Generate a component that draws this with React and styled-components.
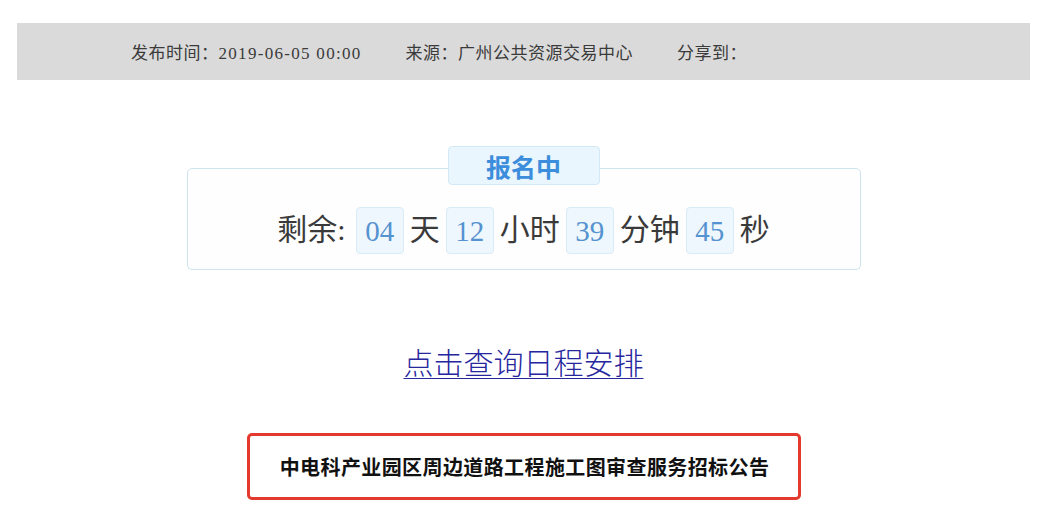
import React from "react";
import styled, { createGlobalStyle } from "styled-components";

const Global = createGlobalStyle`
  html, body { margin: 0; padding: 0; background: #ffffff; }
  body { font-family: "Liberation Serif", "Noto Sans CJK SC", serif; color: #333; }
`;

const Page = styled.div`
  width: 1053px;
  padding: 23px 23px 0 17px;
  box-sizing: border-box;
  display: flex;
  flex-direction: column;
  align-items: stretch;
`;

const InfoBar = styled.div`
  height: 57px;
  background: #dadada;
  display: flex;
  align-items: center;
  gap: 44px;
  padding-left: 114px;
  font-family: "Liberation Serif", "Noto Sans CJK SC", serif;
  font-size: 17px;
  letter-spacing: 0.5px;
  color: #3a3a3a;
`;

const InfoItem = styled.span`
  white-space: nowrap;
`;

const Stamp = styled.span`
  letter-spacing: 1.3px;
`;

const Center = styled.div`
  display: flex;
  flex-direction: column;
  align-items: center;
`;

const CountdownBox = styled.div`
  position: relative;
  margin-top: 88px;
  width: 674px;
  height: 102px;
  box-sizing: border-box;
  border: 1px solid #cfe4ee;
  border-radius: 5px;
  background: #fefefe;
  display: flex;
  justify-content: center;
  align-items: flex-start;
  padding-top: 38px;
`;

const Tag = styled.div`
  position: absolute;
  top: -23px;
  left: 50%;
  transform: translateX(-50%);
  width: 152px;
  height: 39px;
  box-sizing: border-box;
  background: #e9f6fd;
  border: 1px solid #d4e9f5;
  border-radius: 4px;
  display: flex;
  align-items: center;
  justify-content: center;
  font-family: "Noto Sans CJK SC", sans-serif;
  font-weight: 700;
  font-size: 25px;
  color: #3c8ddb;
`;

const Row = styled.div`
  display: flex;
  align-items: center;
  gap: 6px;
  font-family: "Liberation Serif", "Noto Sans CJK SC", serif;
  font-size: 30px;
  color: #3a3a3a;
  height: 47px;
`;

const Label = styled.span`
  line-height: 47px;
  margin-top: -2px;
  margin-right: ${(p) => (p.$lead ? "4px" : "0")};
`;

const Digit = styled.span`
  width: 48px;
  height: 47px;
  box-sizing: border-box;
  background: #eef7fd;
  border: 1px solid #d8ebf6;
  border-radius: 4px;
  display: flex;
  align-items: center;
  justify-content: center;
  font-family: "Liberation Serif", serif;
  font-size: 29px;
  color: #5592d0;
  padding-top: 2px;
`;

const ScheduleLink = styled.a`
  margin-top: 71px;
  font-family: "Noto Sans CJK SC", sans-serif;
  font-weight: 300;
  font-size: 30px;
  line-height: 40px;
  color: #26269e;
  text-decoration: underline;
  text-decoration-thickness: 1px;
  text-underline-offset: 4px;
  cursor: pointer;
`;

const NoticeBox = styled.div`
  margin-top: 52px;
  width: 554px;
  height: 67px;
  box-sizing: border-box;
  border: 3px solid #e4392f;
  border-radius: 5px;
  display: flex;
  align-items: center;
  justify-content: center;
  font-family: "Noto Sans CJK SC", sans-serif;
  font-weight: 700;
  font-size: 20px;
  letter-spacing: 0.4px;
  color: #111;
  padding-left: 2px;
`;

export default function App() {
  const parts = [
    ["04", "天"],
    ["12", "小时"],
    ["39", "分钟"],
    ["45", "秒"],
  ];
  return (
    <>
      <Global />
      <Page>
        <InfoBar>
          <InfoItem>
            发布时间：<Stamp>2019-06-05 00:00</Stamp>
          </InfoItem>
          <InfoItem>来源：广州公共资源交易中心</InfoItem>
          <InfoItem>分享到：</InfoItem>
        </InfoBar>
        <Center>
          <CountdownBox>
            <Tag>报名中</Tag>
            <Row>
              <Label $lead>剩余:</Label>
              {parts.map(([n, u]) => (
                <React.Fragment key={u}>
                  <Digit>{n}</Digit>
                  <Label>{u}</Label>
                </React.Fragment>
              ))}
            </Row>
          </CountdownBox>
          <ScheduleLink>点击查询日程安排</ScheduleLink>
          <NoticeBox>中电科产业园区周边道路工程施工图审查服务招标公告</NoticeBox>
        </Center>
      </Page>
    </>
  );
}
